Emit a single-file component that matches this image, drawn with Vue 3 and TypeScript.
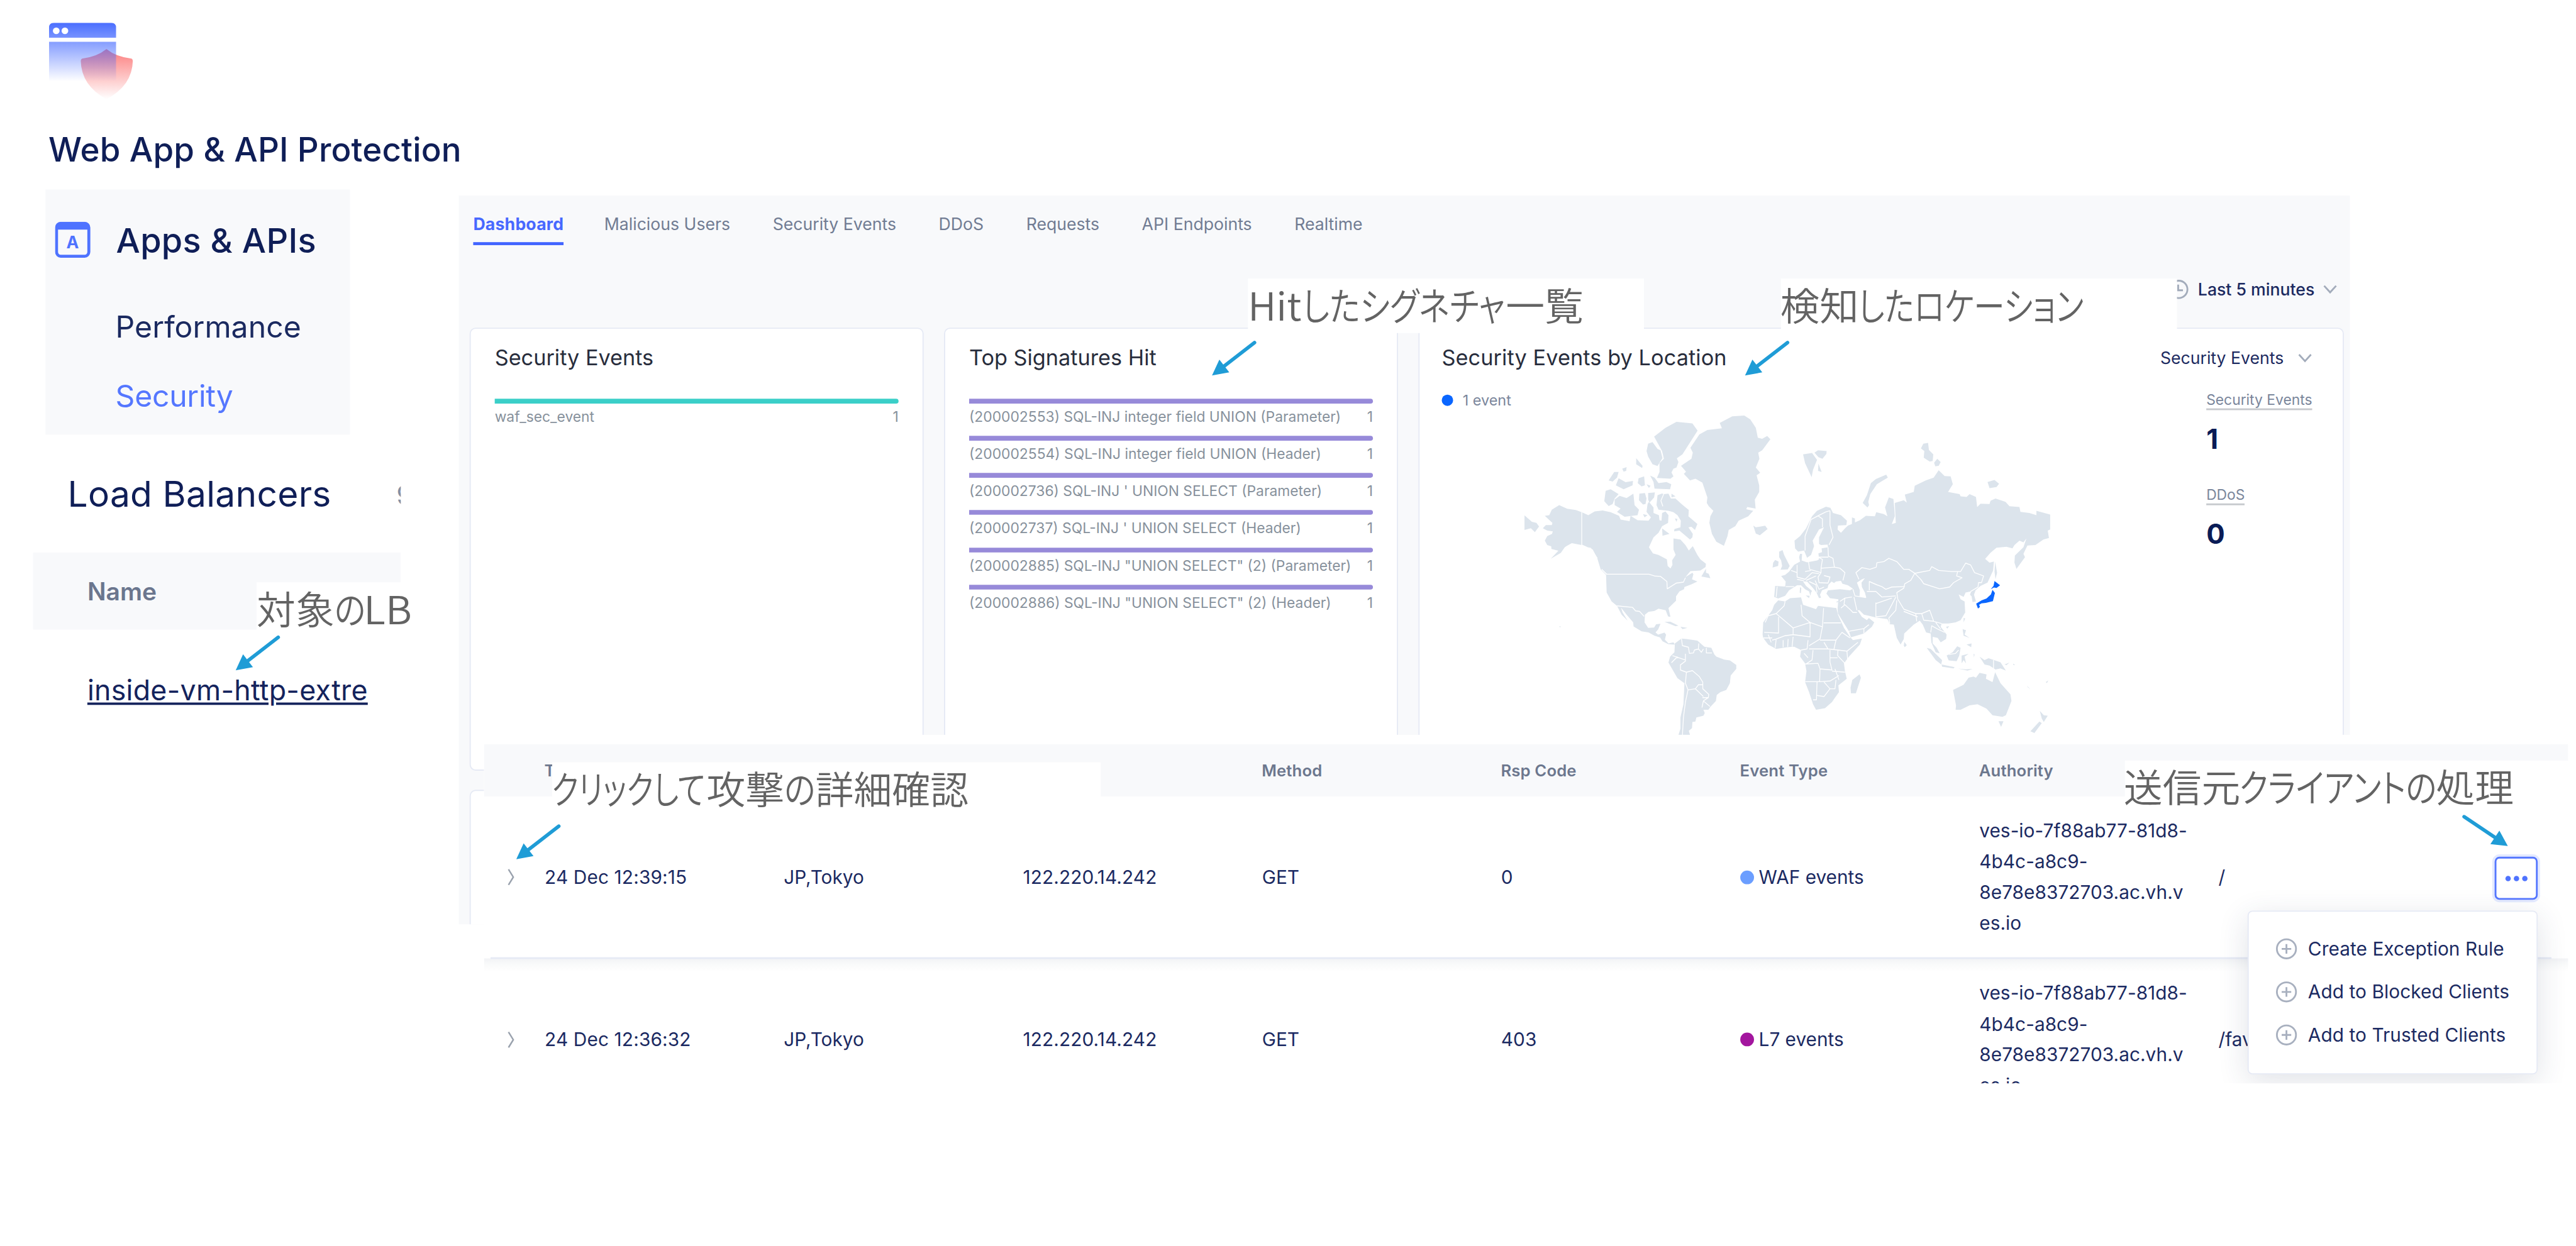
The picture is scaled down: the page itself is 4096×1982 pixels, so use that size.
<script setup lang="ts">
interface Segment { text: string; left: number; scale: number }
interface Note { id: string; segments: Segment[] }
interface Arrow { x1: number; y1: number; x2: number; y2: number }

const tabs = ['Dashboard', 'Malicious Users', 'Security Events', 'DDoS', 'Requests', 'API Endpoints', 'Realtime']

const signatures = [
  '(200002553) SQL-INJ integer field UNION (Parameter)',
  '(200002554) SQL-INJ integer field UNION (Header)',
  "(200002736) SQL-INJ ' UNION SELECT (Parameter)",
  "(200002737) SQL-INJ ' UNION SELECT (Header)",
  '(200002885) SQL-INJ "UNION SELECT" (2) (Parameter)',
  '(200002886) SQL-INJ "UNION SELECT" (2) (Header)',
]

const columns = ['Time', '', '', 'Method', 'Rsp Code', 'Event Type', 'Authority', '']
const authority = ['ves-io-7f88ab77-81d8-', '4b4c-a8c9-', '8e78e8372703.ac.vh.v', 'es.io']
const rows = [
  { time: '24 Dec 12:39:15', place: 'JP,Tokyo', ip: '122.220.14.242', method: 'GET', code: '0', kind: 'waf', event: 'WAF events', path: '/' },
  { time: '24 Dec 12:36:32', place: 'JP,Tokyo', ip: '122.220.14.242', method: 'GET', code: '403', kind: 'l7', event: 'L7 events', path: '/fav' },
]
const actions = ['Create Exception Rule', 'Add to Blocked Clients', 'Add to Trusted Clients']

const notes: Note[] = [
  { id: 'target', segments: [{ text: '対象', left: 0, scale: 1 }, { text: 'の', left: 130, scale: 0.83 }, { text: 'LB', left: 179, scale: 1.04 }] },
  { id: 'signature', segments: [{ text: 'Hit', left: 0, scale: 1.01 }, { text: 'したシグネチャ', left: 91, scale: 0.825 }, { text: '一覧', left: 431, scale: 1 }] },
  { id: 'location', segments: [{ text: '検知', left: -1, scale: 1.01 }, { text: 'したロケーション', left: 129, scale: 0.802 }] },
  { id: 'detail', segments: [{ text: 'クリックして', left: -1, scale: 0.77 }, { text: '攻撃', left: 258, scale: 1 }, { text: 'の', left: 388, scale: 0.83 }, { text: '詳細確認', left: 440, scale: 0.985 }] },
  { id: 'client', segments: [{ text: '送信元', left: -2, scale: 1 }, { text: 'クライアントの', left: 191, scale: 0.825 }, { text: '処理', left: 520, scale: 1 }] },
]

const arrows: Arrow[] = [
  { x1: 465, y1: 1066, x2: 394, y2: 1121 },
  { x1: 2097, y1: 573, x2: 2026, y2: 628 },
  { x1: 2988, y1: 573, x2: 2917, y2: 628 },
  { x1: 934, y1: 1382, x2: 863, y2: 1437 },
  { x1: 4119, y1: 1366, x2: 4192, y2: 1415 },
]
// Triangular head of 26px at the arrow's tip.
function head(a: Arrow): string {
  const len = Math.hypot(a.x2 - a.x1, a.y2 - a.y1)
  const ux = (a.x2 - a.x1) / len
  const uy = (a.y2 - a.y1) / len
  const bx = a.x2 - ux * 26
  const by = a.y2 - uy * 26
  return `${a.x2},${a.y2} ${bx - uy * 13.5},${by + ux * 13.5} ${bx + uy * 13.5},${by - ux * 13.5}`
}

const americas = [
  'M435,532L405,522 362,516 322,500 285,520 272,545 250,548 270,565 288,580 285,590 255,590 240,604 262,615 290,618 286,630 262,640 250,660 262,680 282,686 283,698 318,706 280,742 330,716 350,690 358,685 385,672 435,680 465,692 490,700 513,740 530,790 557,815 560,895 585,935 612,955 635,995 665,1022 640,985 632,963 660,995 693,1030 695,1048 735,1070 770,1075 800,1090 828,1098 840,1115 868,1128 890,1130 902,1130 895,1120 870,1125 852,1108 858,1085 850,1076 818,1085 805,1075 818,1062 830,1036 808,1038 798,1053 768,1055 750,1030 752,995 770,982 800,978 820,968 856,975 868,1003 880,1005 870,965 908,932 908,912 925,890 948,880 950,870 985,858 1015,845 988,835 995,812 990,805 955,825 980,798 1030,795 1056,780 1058,765 1030,745 1015,725 992,685 972,705 955,680 930,655 895,650 895,700 906,725 888,750 890,770 880,786 866,775 862,745 820,725 792,718 772,690 795,645 820,625 838,595 868,580 870,545 855,528 838,535 835,570 825,568 822,545 795,535 795,510 772,485 765,495 760,530 782,555 770,570 715,568 680,548 675,572 630,565 622,548 580,532 540,524 500,528 468,545Z',
  'M148,546L185,575 208,580 221,596 200,622 180,604 148,612Z',
  'M555,435L580,428 620,450 600,470 590,495 570,504 548,482Z',
  'M600,475L625,458 660,468 694,448 700,500 722,520 715,545 650,552 612,530 630,515 600,500Z',
  'M620,378L655,396 692,390 690,410 645,428 606,410Z',
  'M598,350L620,350 612,375 590,393 570,388Z',
  'M638,335L660,328 658,345 645,348Z',
  'M708,287L740,322 738,332 708,315Z',
  'M720,378L748,370 752,410 735,415 716,400Z',
  'M760,405L780,412 772,422Z',
  'M724,448L752,445 760,470 755,495 742,497 722,478Z',
  'M768,445L802,442 798,465 775,488 768,475Z',
  'M778,366L800,375 820,400 860,395 884,405 878,428 800,425 795,395Z',
  'M768,222L790,215 815,245 830,252 840,287 815,323 790,315 768,280 760,255Z',
  'M798,190L855,150 910,123 990,130 1016,163 940,270 912,288 920,305 910,330 895,335 885,352 895,370 880,380 812,377 825,350 825,310 847,290 838,255Z',
  'M815,455L838,447 846,450 870,448 882,470 905,470 940,498 972,522 970,550 1015,585 1003,612 985,598 970,600 992,630 990,645 978,655 925,615 898,618 900,608 930,600 932,570 915,545 895,532 870,525 820,520 810,500Z',
  'M742,540L765,545 750,555Z',
  'M838,605L875,630 840,638Z',
  'M902,560L915,562 910,575Z',
  'M885,448L905,460 885,465Z',
  'M1025,180L1065,160 1138,152 1127,128 1190,98 1250,95 1280,112 1308,150 1318,195 1340,200 1365,187 1381,202 1340,252 1320,262 1326,290 1308,330 1330,353 1312,365 1325,410 1325,440 1303,475 1307,515 1265,508 1260,518 1295,525 1270,550 1222,570 1205,595 1172,612 1166,640 1148,684 1110,665 1088,630 1075,580 1080,550 1095,525 1072,505 1062,490 1065,465 1040,398 1005,380 978,388 947,358 958,348 933,322 985,290 992,262 980,240Z',
  'M1295,592L1308,600 1355,593 1367,608 1328,636 1308,628Z',
  'M1058,787L1058,805 1072,810 1080,830 1035,822Z',
  'M850,1028L880,1027 920,1045 905,1047Z',
  'M930,1050L965,1055 940,1060Z',
  'M323,1047L332,1050 324,1052Z',
  'M902,1125L935,1103 960,1105 1015,1112 1050,1140 1085,1145 1100,1175 1110,1185 1150,1198 1178,1202 1210,1222 1210,1240 1182,1270 1178,1305 1160,1335 1130,1345 1112,1358 1108,1385 1080,1412 1070,1425 1045,1425 1052,1440 1045,1452 1010,1460 1005,1478 990,1480 988,1508 972,1520 980,1545 918,1545 930,1510 930,1460 945,1400 950,1305 915,1282 870,1212 878,1185 900,1165Z',
].join('')

const americasBorders = 'M435,532V680L465,692 480,695 513,740M535,790L560,812H772L800,820 830,822 862,845 864,878 910,852 945,848 955,828M612,955L690,962 705,978 725,980 748,1003M846,450L832,480 842,505M935,1103L940,1135 970,1142 975,1170 995,1168 1000,1155 1022,1150M1022,1125L1020,1150 1035,1165 1045,1150M1060,1145V1168H1088M955,1172V1205L930,1222V1245L960,1255 990,1248 1025,1275 1042,1300 1042,1330 1072,1355 1070,1370H1040M890,1180L955,1200M885,1212L915,1185M960,1255L955,1305 968,1335 1005,1330 1020,1312 1042,1312M1005,1330L1045,1365M968,1335L955,1390 945,1460 940,1540M1038,1415L1045,1385 1078,1410M1045,1385L1070,1370'

const oldWorld = [
  'M195,270L240,264 265,295 245,340 238,373 205,310Z',
  'M252,262L270,252 313,255 312,268 292,290 272,283Z',
  'M272,312L288,350 270,345Z',
  'M494,490L515,455 535,400 560,382 612,362 620,375 565,405 532,450 522,485 526,500 518,510Z',
  'M798,222L822,218 826,250 848,270 845,300 830,303 800,285 803,255 786,243Z',
  'M852,308L868,290 885,305 875,322 858,324Z',
  'M1120,395L1155,386 1178,403 1165,418 1130,423Z',
  'M152,660L180,640 210,605 240,550 265,525 310,507 332,512 345,535 385,545 415,570 412,590 370,592 368,610 385,625 405,605 420,592 440,585 440,555 455,560 455,578 480,568 510,548 555,550 562,532 600,540 618,550 606,510 625,465 648,472 652,510 655,550 640,585 660,580 655,490 700,478 715,488 705,452 750,440 755,412 810,388 850,375 875,342 905,368 935,370 946,405 922,440 980,450 985,460 1015,463 1030,450 1062,463 1068,508 1085,493 1130,495 1135,480 1160,470 1210,485 1230,505 1280,508 1285,530 1330,535 1365,545 1365,525 1434,542 1434,610 1422,615 1428,648 1400,655 1360,680 1320,682 1300,720 1308,735 1265,788 1255,760 1257,728 1300,690 1315,650 1300,668 1280,660 1255,680 1245,695 1215,688 1165,692 1135,715 1108,743 1130,760 1152,755 1148,795 1120,850 1085,865 1060,885 1052,905 1062,935 1045,938 1040,912 1032,905 1038,890 1010,895 1000,915 975,903 985,925 1005,935 1008,985 985,1020 960,1030 925,1035 890,1035 885,1050 915,1085 912,1105 885,1120 870,1100 845,1095 845,1125 865,1145 880,1170 860,1165 838,1120 835,1080 812,1075 795,1040 780,1022 750,1040 702,1080 700,1105 684,1130 665,1100 650,1040 630,1038 618,1015 560,1008 525,1000 500,995 478,975 468,975 490,1005 515,1020 525,1010 552,1030 540,1050 500,1080 435,1097 425,1070 370,990 368,970 372,925 330,920 312,900 320,885 380,880 430,885 445,878 420,862 392,855 385,842 360,845 350,852 338,845 322,860 318,875 290,885 280,905 285,918 275,920 262,895 245,875 215,845 195,845 210,865 240,888 235,895 232,910 225,890 205,880 185,862 165,862 125,885 105,910 70,922 50,915 55,865 105,868 108,845 85,820 105,815 125,800 150,770 180,755 175,735 180,720 190,720 188,750 215,758 265,750 275,745 272,718 290,712 288,695 320,690 318,678 285,680 275,675 275,645 300,600 275,610 243,660 250,685 235,725 215,738 200,705 170,710 155,695Z',
  'M75,710L92,703 100,725 128,775 118,790 82,792 90,775 85,750 75,735Z',
  'M45,760L55,748 72,755 70,775 42,782Z',
  'M180,870L186,875 184,898 178,895Z',
  'M208,908L228,910 225,920Z',
  'M295,935H310M362,936L375,932 365,941Z',
  'M70,930L105,935 130,920 185,917 195,950 260,970 270,955 362,965 370,995 400,1055 430,1095 445,1110 490,1103 480,1130 425,1185 400,1215 405,1250 414,1285 372,1315 375,1345 355,1370 340,1390 305,1418 260,1425 245,1400 225,1345 205,1300 212,1250 205,1215 180,1185 185,1155 150,1140 115,1142 60,1150 20,1130 -5,1100 -8,1085 -5,1030 40,975 50,950Z',
  'M478,1265L485,1280 460,1350 435,1350 433,1325 442,1290Z',
  'M815,1145L835,1150 892,1200 888,1220 860,1200Z',
  'M890,1220L955,1232 950,1238 892,1230Z',
  'M972,1239L1010,1242 1045,1240 1020,1248Z',
  'M915,1180L945,1165 968,1138 985,1145 978,1180 965,1205 925,1202Z',
  'M990,1180L1025,1172 1005,1185 1012,1215 1000,1200 990,1215Z',
  'M1050,1172L1055,1175 1052,1188Z',
  'M1080,1185L1105,1200 1125,1192 1185,1210 1212,1248 1185,1238 1160,1243 1130,1225 1105,1220Z',
  'M1205,1220L1230,1212 1215,1223Z',
  'M1248,1216L1258,1222 1250,1223Z',
  'M995,1060L1012,1065 1005,1085 1030,1100 1000,1090Z',
  'M1015,1130L1040,1125 1038,1142Z',
  'M1000,1010L1008,1012 1000,1030Z',
  'M912,1050L928,1047 918,1058Z',
  'M703,1118L715,1133 705,1142 700,1135Z',
  'M1158,755L1168,805 1160,835 1155,800Z',
  'M947,1335L1000,1312 1025,1280 1050,1275 1062,1280 1080,1258 1115,1265 1112,1285 1145,1300 1158,1255 1185,1305 1235,1355 1240,1385 1212,1450 1195,1457 1145,1450 1115,1420 1070,1400 1030,1405 985,1425 960,1425 962,1405Z',
  'M1175,1477L1200,1477 1188,1502Z',
  'M1382,1430L1402,1450 1422,1452 1402,1480 1392,1465Z',
  'M1380,1478L1392,1485 1355,1530 1335,1522Z',
  'M1318,1317L1335,1332 1322,1323Z',
  'M1412,1300L1425,1292 1418,1304Z',
].join('')

const oldWorldBorders = 'M475,835L460,805 490,782 530,790 562,780 565,760 600,755 625,740 665,755 700,790 725,790 755,808 830,795 840,778 875,795 940,800H985L1010,762 1035,770 1055,805 1100,820 1090,850H1075L1072,870 1035,890M755,808L785,835 800,855 880,878 930,870 950,850 992,828 965,820 970,800M755,808L735,840 705,855 700,875 665,895 670,925 700,970 760,990H790L830,975 840,1000 850,1025 890,1035M527,885V845L565,860 590,868 610,880 640,870 705,868M515,890H560L590,915 660,910M445,880L455,910 510,918M450,915L465,975M560,940V1005L610,1000 640,950 660,915M640,920L560,945M630,1035L625,1010 660,975 665,930M700,980L770,1005M760,990L765,1025M790,990L800,1020 850,1025M835,1075L840,1045 870,1060 905,1075M860,1030L885,1060M380,935L405,920 440,915M385,965L405,950 435,975 445,985 465,985M405,920L400,950M425,1070L500,1058V1080M500,1058L525,1040M205,705V640L235,565 270,548 310,530 330,525M330,525V590L345,645 325,680M270,548L292,562V600M320,690L322,730 345,740 352,780 285,785 292,745 272,735 322,735M352,780L380,785 405,805 395,840M222,755L228,790 285,805V785M285,805L270,825 275,850 320,852 330,825 300,818M165,770V825L205,835 240,805 275,810M205,800L235,795M165,835L200,842M108,868H150M135,795L165,805M65,868L60,915M210,840L260,820M225,845L260,860 265,895M255,840L275,880 300,870M105,935L100,955 60,990 20,1000 5,1030M60,990L145,1055 230,1030 190,1000 185,950M72,1005V1078L0,1075M145,1055V1085L105,1090 60,1105 40,1110M145,1085L230,1095V1030M230,1030L292,1050 298,965M298,1032H385M292,1050L280,1105 225,1135M20,1085L35,1120M60,1108L55,1145M95,1110V1142M120,1105L118,1140M-5,1100L40,1100M140,1140L145,1095M280,1110H360L390,1075 430,1100M220,1110L215,1150 185,1155M225,1150H320L300,1120M360,1110L350,1150M320,1150L370,1155 415,1160 470,1120M415,1160L418,1195M245,1155L240,1200 210,1218M200,1170L220,1190M330,1155V1210L340,1245 280,1240 270,1215 205,1218M370,1155L368,1180 405,1215M330,1190H368M280,1240L278,1298H205M340,1250L405,1255M355,1240L375,1290M278,1298L330,1295 375,1270M265,1300L262,1380H245M265,1360L300,1365 330,1330H355L360,1290M330,1330L300,1300M1150,1200V1240M925,1175L960,1170 975,1155'
const caspian = 'M505,830L490,835 465,850 480,885 478,912 512,918 505,895 490,870 488,850Z'
const japan = 'M1155,843L1183,862 1165,874 1152,872 1136,880 1150,865ZM1145,883L1157,897 1147,934 1112,942 1090,944 1078,950 1082,960 1072,967 1063,945 1090,930 1115,922 1137,903Z'
</script>

<template>
  <div class="viewport">
    <main class="board">
      <section class="product">
        <svg class="product-logo" viewBox="0 0 142 130">
          <defs>
            <linearGradient id="win" x1="0" y1="0" x2="0" y2="98" gradientUnits="userSpaceOnUse">
              <stop offset="0" stop-color="#4a6eff" />
              <stop offset="1" stop-color="#4a6eff" stop-opacity="0" />
            </linearGradient>
            <linearGradient id="shield" x1="0" y1="44" x2="0" y2="128" gradientUnits="userSpaceOnUse">
              <stop offset="0" stop-color="#fb5757" stop-opacity=".78" />
              <stop offset="1" stop-color="#fb5757" stop-opacity="0" />
            </linearGradient>
          </defs>
          <path d="M96 44Q112 57 138 60Q140 61 140 64Q139 105 96 128Q54 105 53 64Q53 61 55 60Q80 57 96 44Z" fill="url(#shield)" />
          <path d="M0 25V8Q0 0 8 0H104Q112 0 112 8V25Z" fill="url(#win)" />
          <path d="M0 32H112V98H0Z" fill="url(#win)" />
          <circle cx="12" cy="13.5" r="5.6" fill="#fff" />
          <circle cx="26.5" cy="13.5" r="5.6" fill="#fff" />
        </svg>
        <h1>Web App &amp; API Protection</h1>
      </section>

      <nav class="side">
        <div class="side-group">
          <svg class="side-icon" viewBox="0 0 60 60">
            <rect x="2.5" y="2.5" width="54" height="55" rx="7" fill="none" stroke="#4f73ff" stroke-width="5" />
            <path d="M2 13V8Q2 2 8 2H51Q57 2 57 8V13Z" fill="#4f73ff" />
            <text x="29.5" y="44.5" text-anchor="middle" font-family="Inter, sans-serif" font-weight="700" font-size="28" fill="#4f73ff">A</text>
          </svg>
          <span>Apps &amp; APIs</span>
        </div>
        <div class="side-item">Performance</div>
        <div class="side-item current">Security</div>
      </nav>

      <section class="lb">
        <div class="lb-title"><span>Load Balancers</span><span class="lb-count">9</span></div>
        <div class="lb-head">Name</div>
        <div class="lb-row"><a>inside-vm-http-extre</a></div>
      </section>

      <section class="dash">
        <div class="tabs">
          <span v-for="t in tabs" :key="t" class="tab" :class="{ on: t === 'Dashboard' }">{{ t }}</span>
        </div>
        <div class="range">
          <svg class="clock" viewBox="0 0 34 34"><circle cx="17" cy="17" r="14.5" /><path d="M16 9V18.500H24" /></svg>
          <span>Last 5 minutes</span>
          <svg class="chev" viewBox="0 0 24 16"><path d="M2 2L12 13L22 2" /></svg>
        </div>
        <div class="cards">
          <article class="card">
            <h2>Security Events</h2>
            <div class="meter teal">
              <i></i>
              <p><span>waf_sec_event</span><span>1</span></p>
            </div>
          </article>
          <article class="card">
            <h2>Top Signatures Hit</h2>
            <div v-for="s in signatures" :key="s" class="meter">
              <i></i>
              <p><span>{{ s }}</span><span>1</span></p>
            </div>
          </article>
          <article class="card geo">
            <div class="geo-main">
              <h2>Security Events by Location</h2>
              <div class="legend"><i></i>1 event</div>
              <svg class="world" viewBox="0 0 2850 1540" preserveAspectRatio="none">
                <path :d="americas" class="land" />
                <path :d="americasBorders" class="border" />
                <g transform="translate(1350 0)">
                  <path :d="oldWorld" class="land" />
                  <path :d="caspian" fill="#fff" />
                  <path :d="oldWorldBorders" class="border" />
                  <path :d="japan" fill="#0a66ff" />
                </g>
              </svg>
            </div>
            <aside class="geo-side">
              <div class="pick"><span>Security Events</span><svg class="chev" viewBox="0 0 24 16"><path d="M2 2L12 13L22 2" /></svg></div>
              <div class="stat"><u>Security Events</u><b>1</b></div>
              <div class="stat"><u>DDoS</u><b>0</b></div>
            </aside>
          </article>
        </div>
        <div class="cards second"><article class="card"></article></div>
      </section>

      <section class="events">
        <div class="thead">
          <span v-for="(c, i) in columns" :key="i">{{ c }}</span>
        </div>
        <div v-for="r in rows" :key="r.time" class="trow">
          <svg class="expand" viewBox="0 0 14 28"><path d="M2 1L10 14L2 27" /></svg>
          <span class="time">{{ r.time }}</span>
          <span>{{ r.place }}</span>
          <span class="ip">{{ r.ip }}</span>
          <span>{{ r.method }}</span>
          <span>{{ r.code }}</span>
          <span class="kind"><i :class="r.kind"></i>{{ r.event }}</span>
          <span class="auth"><em v-for="a in authority" :key="a">{{ a }}</em></span>
          <span>{{ r.path }}</span>
        </div>
        <button class="more"><i></i><i></i><i></i></button>
        <ul class="menu">
          <li v-for="a in actions" :key="a">
            <svg viewBox="0 0 38 38"><circle cx="19" cy="19" r="16" /><path d="M19 11V27M11 19H27" /></svg>
            <span>{{ a }}</span>
          </li>
        </ul>
      </section>

      <div v-for="n in notes" :key="n.id" class="note" :class="n.id">
        <span v-for="s in n.segments" :key="s.text" :style="{ left: s.left + 'px', transform: `scaleX(${s.scale})` }">{{ s.text }}</span>
      </div>

      <svg class="arrows" viewBox="0 0 4306 2084">
        <g v-for="a in arrows" :key="a.x1">
          <line :x1="a.x1" :y1="a.y1" :x2="a.x2 + (a.x1 - a.x2) * 0.25" :y2="a.y2 + (a.y1 - a.y2) * 0.25" />
          <polygon :points="head(a)" />
        </g>
      </svg>
    </main>
  </div>
</template>

<style>
body { margin: 0; background: #fff; }
</style>

<style scoped>
.viewport { width: 100vw; height: 100vh; overflow: hidden; }
.board {
  position: relative; width: 4306px; height: 2084px; overflow: hidden; background: #fff;
  transform: scale(.95123, .95106); transform-origin: 0 0;
  font-family: Inter, sans-serif; color: #0f1e57;
}
h1, h2, p, ul { margin: 0; padding: 0; font-weight: 400; }
svg { display: block; flex: none; }

.product { position: absolute; left: 82px; top: 38px; }
.product-logo { width: 142px; height: 130px; }
h1 { margin: 52px 0 0 -1px; font-size: 55.6px; line-height: 60px; font-weight: 500; letter-spacing: .15px; white-space: nowrap; }

.side { position: absolute; left: 76px; top: 317px; width: 509px; height: 410px; box-sizing: border-box; padding-top: 54px; background: #f8f9fb; }
.side-group { display: flex; align-items: center; height: 60px; padding-left: 16px; font-size: 56.8px; font-weight: 500; letter-spacing: .3px; }
.side-group span { padding-top: 2px; }
.side-icon { width: 60px; height: 60px; margin-right: 42px; }
.side-item { height: 60px; line-height: 60px; margin-top: 86px; padding-left: 117px; font-size: 50.6px; letter-spacing: .05px; color: #1b2a60; }
.side-item.current { margin-top: 55px; color: #5577ff; letter-spacing: -.3px; }

.lb { position: absolute; left: 55px; top: 790px; width: 615px; height: 450px; overflow: hidden; background: #fff; }
.lb-title { display: flex; align-items: center; height: 71px; padding-left: 58px; margin-bottom: 63px; font-size: 59.8px; letter-spacing: .3px; white-space: nowrap; }
.lb-count { margin-left: 109px; font-size: 45px; color: #8490a4; padding-top: 3px; }
.lb-head { height: 129px; line-height: 131px; padding-left: 91px; background: #f8f9fb; font-size: 41px; font-weight: 600; color: #6b768e; }
.lb-row { margin-top: 65px; padding-left: 91px; font-size: 47px; line-height: 72px; letter-spacing: .3px; color: #14235c; white-space: nowrap; }
.lb-row a { text-decoration: underline; text-decoration-thickness: 4px; text-underline-offset: 4px; }

.dash { position: absolute; left: 767px; top: 327px; width: 3161px; height: 1219px; overflow: hidden; background: #f8f9fb; }
.tabs { display: flex; gap: 71px; height: 83px; padding-left: 24px; }
.tab { box-sizing: border-box; height: 83px; line-height: 97px; font-size: 28px; color: #717c93; white-space: nowrap; }
.tab.on { width: 151px; margin-right: -3px; color: #4768ff; font-weight: 700; letter-spacing: .2px; border-bottom: 5px solid #4164ff; }
.range { display: flex; align-items: center; justify-content: flex-end; height: 34px; margin-top: 57px; padding-right: 21px; font-size: 28px; font-weight: 450; color: #1c2a60; }
.clock { width: 34px; height: 34px; margin-right: 15px; fill: none; stroke: #a3acbb; stroke-width: 3; }
.chev { width: 24px; height: 16px; fill: none; stroke: #a3acbb; stroke-width: 3; }
.range .chev { margin-left: 14px; }
.cards { display: flex; gap: 34px; margin-top: 47px; padding-left: 18px; }
.card { box-sizing: border-box; flex: none; width: 759px; height: 741px; border: 2.5px solid #e6eaf5; border-radius: 10px; background: #fff; padding: 30px 39px 0 40px; }
.cards.second { margin-top: 32px; }
.second .card { width: 3133px; }
h2 { height: 36px; line-height: 36px; font-size: 36px; color: #282d3c; white-space: nowrap; }
.card h2 { margin-bottom: 50.5px; }
.meter { height: 62.3px; }
.meter i { display: block; height: 8px; width: 675px; border-radius: 0 4px 4px 0; background: #978ad9; }
.meter.teal i { background: #3bcfc8; }
.meter p { display: flex; justify-content: space-between; width: 675px; height: 44px; line-height: 45px; font-size: 24px; color: #87919c; white-space: nowrap; }
.card.geo { display: flex; justify-content: space-between; width: 1547px; padding-left: 37px; padding-right: 51px; }
.geo-main { display: flex; flex-direction: column; }
.card.geo h2 { margin-bottom: 33px; letter-spacing: .1px; }
.legend { display: flex; align-items: center; height: 32px; margin-top: 4px; font-size: 24.6px; color: #7a869b; }
.legend i { width: 19px; height: 19px; margin-right: 16px; border-radius: 50%; background: #0a66ff; }
.world { width: 950px; height: 569.7px; margin: -25px 0 0 89px; }
.land { fill: #dce4ec; }
.border { fill: none; stroke: #fff; stroke-width: 4; stroke-linejoin: round; }
.geo-side { width: 254px; margin-top: 2px; }
.pick { display: flex; align-items: center; justify-content: space-between; height: 34px; font-size: 28px; color: #1c2a60; white-space: nowrap; }
.stat { display: flex; flex-direction: column; align-items: flex-start; padding-left: 77px; margin-top: 37px; height: 122px; }
.stat u { text-decoration: none; border-bottom: 3px solid #c6c9cd; font-size: 24px; line-height: 31px; height: 30px; color: #7a869b; white-space: nowrap; }
.stat b { margin-top: 22px; font-size: 46px; line-height: 52px; font-weight: 700; color: #0a1c56; }

.events { position: absolute; left: 809px; top: 1229px; width: 3484px; height: 583px; overflow: hidden; background: #fff; color: #1b2a62; font-size: 31.3px; white-space: nowrap; }
.thead { box-sizing: border-box; display: grid; grid-template-columns: repeat(8, 399.7px); align-items: center; height: 87px; margin-top: 15.5px; padding: 2px 0 0 101px; background: #f8f9fb; font-size: 27px; font-weight: 600; letter-spacing: .15px; color: #6c778e; }
.trow { position: relative; display: grid; grid-template-columns: 61.5px repeat(8, 399.7px); align-items: center; height: 271.4px; padding-left: 40px; }
.trow + .trow { background: linear-gradient(#f2f3f6, #f9fafa 10px, #fff 22px) no-repeat; }
.trow + .trow::before { content: ""; position: absolute; left: 11px; top: -2px; width: 3445px; height: 3px; background: #e6eaf5; }
.expand { width: 14px; height: 28px; margin-left: -1px; fill: none; stroke: #9aa2ae; stroke-width: 2.6; }
.time { letter-spacing: .15px; }
.ip { letter-spacing: .12px; }
.kind { display: flex; align-items: center; }
.kind i { width: 23px; height: 23px; margin-right: 8px; border-radius: 50%; }
.waf { background: #6b9eff; }
.l7 { background: #a3169e; }
.auth { display: flex; flex-direction: column; padding-top: 1px; }
.auth em { font-style: normal; height: 51.3px; line-height: 51.3px; letter-spacing: .05px; }
.more { position: absolute; left: 3361px; top: 204px; width: 72px; height: 72px; box-sizing: border-box; padding: 0; display: flex; align-items: center; justify-content: center; gap: 5px; border: 3px solid #5577ff; border-radius: 8px; background: #fff; box-shadow: 0 0 0 4px #e4eaff; }
.more i { width: 9px; height: 9px; border-radius: 50%; background: #4f73ff; }
.menu { position: absolute; left: 2948px; top: 294px; width: 485px; height: 274px; box-sizing: border-box; padding: 26px 0 0 44px; border: 2.5px solid #e6eaf5; border-radius: 8px; background: #fff; box-shadow: 0 12px 50px rgba(40, 55, 90, .14); list-style: none; }
.menu li { display: flex; align-items: center; height: 71.9px; letter-spacing: .08px; }
.menu svg { width: 38px; height: 38px; margin-right: 17px; fill: none; stroke: #a8b0bf; stroke-width: 3; }

.note { position: absolute; z-index: 2; height: 91px; background: #fff; color: #636363; font: 350 65px/91px "Noto Sans CJK JP", sans-serif; font-feature-settings: "palt"; white-space: nowrap; }
.note span { position: absolute; top: -3px; transform-origin: 0 0; }
.note.target { left: 429px; top: 974px; width: 258px; }
.note.signature { left: 2086px; top: 466px; width: 662px; }
.note.location { left: 2977px; top: 466px; width: 662px; }
.note.detail { left: 923px; top: 1275px; width: 917px; }
.note.client { left: 3552px; top: 1272px; width: 741px; }
.arrows { position: absolute; z-index: 3; left: 0; top: 0; width: 4306px; height: 2084px; pointer-events: none; }
.arrows line { stroke: #1f9cd6; stroke-width: 6; stroke-linecap: round; }
.arrows polygon { fill: #1f9cd6; }
</style>
